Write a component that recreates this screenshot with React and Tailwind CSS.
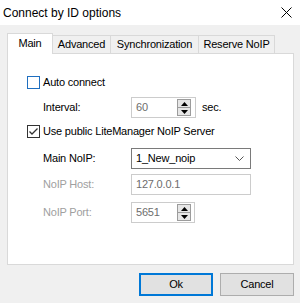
import React from "react";

function Spin() {
  return (
    <div className="flex flex-col w-[14px] h-[17px] border border-[#9c9c9c] bg-[#e6e6e6]">
      <div className="flex-1 flex items-center justify-center border-b border-[#9c9c9c]">
        <svg width="7" height="4" viewBox="0 0 7 4">
          <path d="M0 4 L3.5 0 L7 4 Z" fill="#000" />
        </svg>
      </div>
      <div className="flex-1 flex items-center justify-center">
        <svg width="7" height="4" viewBox="0 0 7 4">
          <path d="M0 0 L3.5 4 L7 0 Z" fill="#000" />
        </svg>
      </div>
    </div>
  );
}

function Check({ checked, focus }) {
  return (
    <div
      className={`w-[13px] h-[13px] border bg-white flex items-center justify-center ${
        focus ? "border-[#1f6fc0]" : "border-[#333333]"
      }`}
    >
      {checked && (
        <svg width="11" height="11" viewBox="0 0 11 11">
          <path d="M1.5 5.5 L4 8 L9.5 2.5" fill="none" stroke="#333" strokeWidth="1.3" />
        </svg>
      )}
    </div>
  );
}

export default function App() {
  const tabs = [
    { name: "Advanced", w: "w-[58px]" },
    { name: "Synchronization", w: "w-[88px]" },
    { name: "Reserve NoIP", w: "w-[76px]" },
  ];

  return (
    <div
      className="w-[300px] h-[303px] bg-[#f0f0f0] text-[11px] tracking-[-0.2px] text-black overflow-hidden"
      style={{ fontFamily: '"Liberation Sans", Arial, sans-serif' }}
    >
      {/* title */}
      <div className="h-[25px] bg-white flex items-center justify-between pl-[3px] pr-[8px]">
        <span className="text-[12px] tracking-normal">Connect by ID options</span>
        <svg width="11" height="11" viewBox="0 0 11 11">
          <path d="M0.5 0.5 L10.5 10.5 M10.5 0.5 L0.5 10.5" stroke="#000" strokeWidth="1" />
        </svg>
      </div>

      <div className="pt-[8px] pl-[7px]">
        {/* tabs */}
        <div className="flex items-end h-[20px]">
          <div className="w-[46px] h-[21px] -mb-px relative z-10 bg-white border border-b-0 border-[#d9d9d9] flex items-center justify-center pb-[1px]">
            Main
          </div>
          {tabs.map(t => (
            <div
              key={t.name}
              className={`${t.w} h-[18px] border border-l-0 border-b-0 border-[#d9d9d9] flex items-center justify-center`}
            >
              {t.name}
            </div>
          ))}
        </div>

        {/* panel */}
        <div className="w-[287px] h-[212px] bg-white border border-[#d9d9d9] pl-[19px] pt-[22px] flex flex-col">
          <div className="flex items-center h-[13px]">
            <Check focus />
            <span className="ml-[3px]">Auto connect</span>
          </div>

          <div className="flex items-center h-[21px] mt-[8px]">
            <span className="w-[104px] pl-[16px]">Interval:</span>
            <div className="w-[65px] h-[21px] border border-[#cccccc] flex items-center justify-between pl-[4px] pr-[4px]">
              <span className="text-[#6d6d6d]">60</span>
              <Spin />
            </div>
            <span className="ml-[6px]">sec.</span>
          </div>

          <div className="flex items-center h-[13px] mt-[7px]">
            <Check checked />
            <span className="ml-[3px]">Use public LiteManager NoIP Server</span>
          </div>

          <div className="flex items-center h-[21px] mt-[10px]">
            <span className="w-[104px] pl-[16px]">Main NoIP:</span>
            <div className="w-[120px] h-[21px] border border-[#7a7a7a] flex items-center justify-between pl-[4px] pr-[6px]">
              <span>1_New_noip</span>
              <svg width="9" height="5" viewBox="0 0 9 5">
                <path d="M0.5 0.5 L4.5 4.5 L8.5 0.5" fill="none" stroke="#555" strokeWidth="1" />
              </svg>
            </div>
          </div>

          <div className="flex items-center h-[21px] mt-[5px]">
            <span className="w-[104px] pl-[16px] text-[#a0a0a0]">NoIP Host:</span>
            <div className="w-[120px] h-[21px] border border-[#cccccc] flex items-center pl-[4px]">
              <span className="text-[#6d6d6d]">127.0.0.1</span>
            </div>
          </div>

          <div className="flex items-center h-[21px] mt-[7px]">
            <span className="w-[104px] pl-[16px] text-[#a0a0a0]">NoIP Port:</span>
            <div className="w-[64px] h-[21px] border border-[#cccccc] flex items-center justify-between pl-[4px] pr-[3px]">
              <span className="text-[#6d6d6d]">5651</span>
              <Spin />
            </div>
          </div>
        </div>
      </div>

      {/* buttons */}
      <div className="flex justify-end gap-[7px] pr-[6px] mt-[8px]">
        <button className="w-[74px] h-[23px] bg-[#e1e1e1] border-2 border-[#0078d7] flex items-center justify-center">
          Ok
        </button>
        <button className="w-[74px] h-[23px] bg-[#e1e1e1] border border-[#adadad] flex items-center justify-center">
          Cancel
        </button>
      </div>
    </div>
  );
}
